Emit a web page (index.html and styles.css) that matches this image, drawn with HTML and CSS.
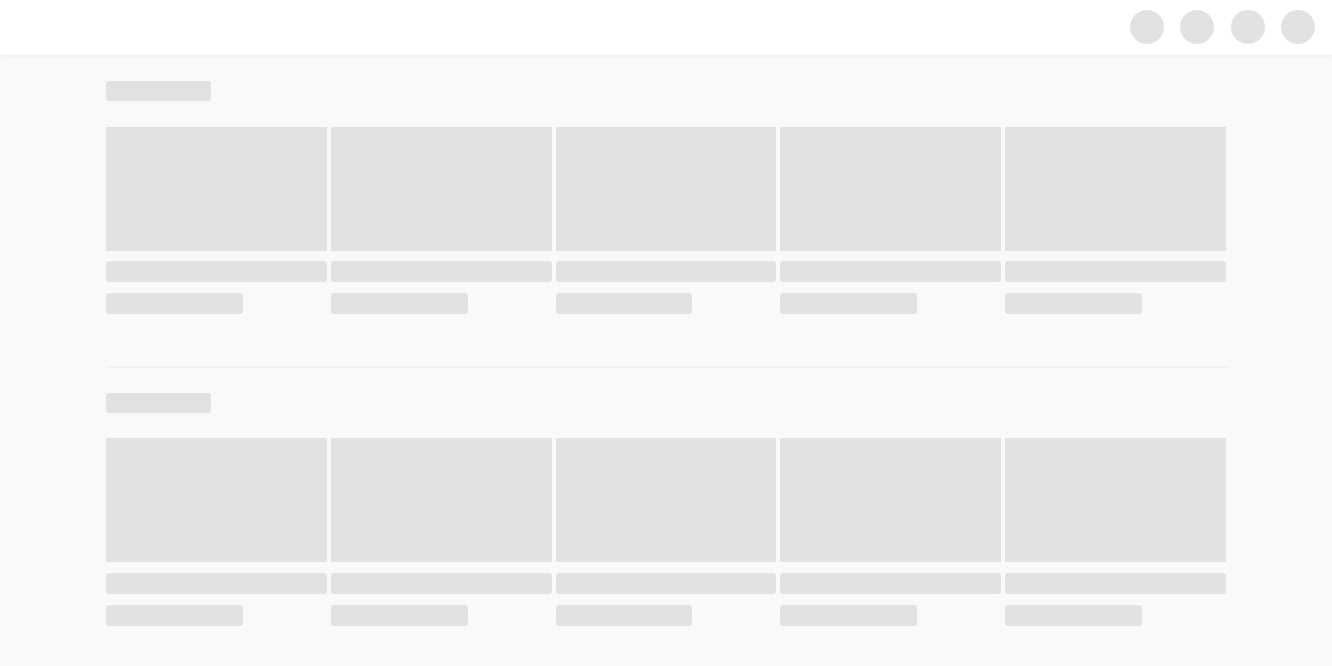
FILE: index.html
```html
<!DOCTYPE html>
<html lang="en">
<head>
    <meta charset="UTF-8">
    <meta name="viewport" content="width=device-width, initial-scale=1.0">
    <title>Loading</title>
    <link rel="stylesheet" href="styles.css">
</head>
<body>
    <header class="topbar">
        <span class="dot"></span>
        <span class="dot"></span>
        <span class="dot"></span>
        <span class="dot"></span>
    </header>
    <main class="content">
        <section class="shelf">
            <div class="bone title"></div>
            <div class="row">
                <div class="card"><div class="bone thumb"></div><div class="bone line"></div><div class="bone line short"></div></div>
                <div class="card"><div class="bone thumb"></div><div class="bone line"></div><div class="bone line short"></div></div>
                <div class="card"><div class="bone thumb"></div><div class="bone line"></div><div class="bone line short"></div></div>
                <div class="card"><div class="bone thumb"></div><div class="bone line"></div><div class="bone line short"></div></div>
                <div class="card"><div class="bone thumb"></div><div class="bone line"></div><div class="bone line short"></div></div>
            </div>
        </section>
        <section class="shelf">
            <div class="bone title"></div>
            <div class="row">
                <div class="card"><div class="bone thumb"></div><div class="bone line"></div><div class="bone line short"></div></div>
                <div class="card"><div class="bone thumb"></div><div class="bone line"></div><div class="bone line short"></div></div>
                <div class="card"><div class="bone thumb"></div><div class="bone line"></div><div class="bone line short"></div></div>
                <div class="card"><div class="bone thumb"></div><div class="bone line"></div><div class="bone line short"></div></div>
                <div class="card"><div class="bone thumb"></div><div class="bone line"></div><div class="bone line short"></div></div>
            </div>
        </section>
    </main>
</body>
</html>
```

FILE: styles.css
```css
body { margin: 0; background: #f9f9f9; font-family: "Liberation Sans", Arial, sans-serif; }
.topbar { height: 53px; background: #fff; border-bottom: 1px solid #f0f0f0; box-shadow: 0 1px 2px #f2f2f2; display: flex; justify-content: flex-end; align-items: center; gap: 16.5px; padding: 0 17px 2px; }
.dot { width: 34px; height: 34px; border-radius: 50%; background: #e2e2e2; }
.content { width: 1124px; margin-left: 106px; }
.shelf { padding: 25px 0 52px; }
.shelf + .shelf { border-top: 2px solid #f1f1f1; }
.bone { background: #e2e2e2; border-radius: 3px; }
.title { width: 105px; height: 20px; margin-bottom: 26px; }
.shelf + .shelf .title { margin-bottom: 25px; }
.shelf + .shelf .line { margin-top: 11px; }
.row { display: grid; grid-template-columns: repeat(5, 1fr); }
.card { padding-right: 4px; }
.thumb { height: 124px; border-radius: 0; }
.line { height: 21px; margin-top: 10px; }
.line.short { width: 62%; margin-top: 11px; }
```
